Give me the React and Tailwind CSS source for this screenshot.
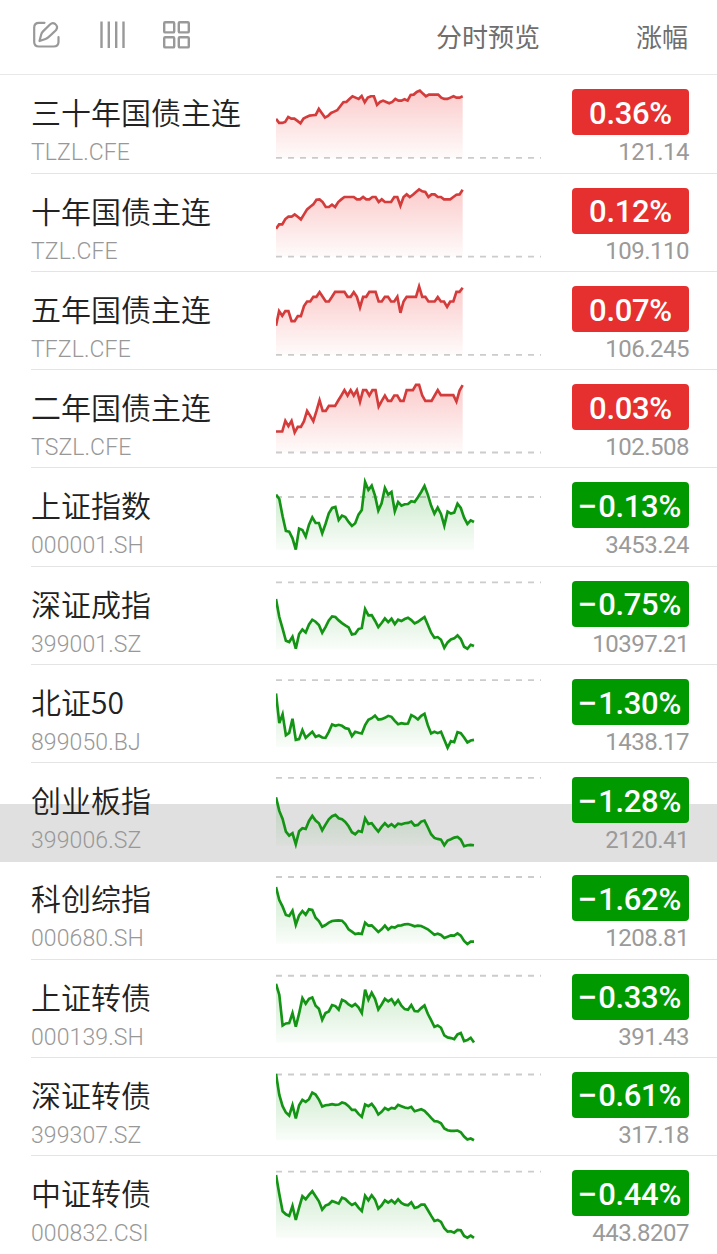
const SPAN = 98.24

const rows = [
  { name: '三十年国债主连', code: 'TLZL.CFE', pct: '0.36%', price: '121.14', oy: -13.8, dash: 235, base: 235,
    ys: [118,130,130,127,112,117,117,124,131,117,112,108,107,106,88,101,114,109,100,96,92,80,68,67,58,50,54,58,49,68,54,50,50,76,67,63,67,71,67,58,63,63,59,63,46,45,37,33,42,50,45,45,45,45,54,58,58,54,50,54,54,50] },
  { name: '十年国债主连', code: 'TZL.CFE', pct: '0.12%', price: '109.110', oy: 280.9, dash: 529, base: 529,
    ys: [445,432,432,416,409,409,402,409,417,402,387,379,372,358,357,365,380,380,373,380,365,357,350,350,350,350,357,357,350,357,357,350,350,365,357,365,365,365,350,350,376,350,342,350,343,335,327,333,335,350,342,342,350,350,357,357,357,350,343,342,328] },
  { name: '五年国债主连', code: 'TFZL.CFE', pct: '0.07%', price: '106.245', oy: -9.4, dash: 239, base: 239,
    ys: [152,108,122,108,108,138,138,123,123,93,79,79,65,65,51,65,79,79,65,50,50,50,50,65,65,51,65,97,65,65,50,50,50,79,79,65,65,79,79,65,113,79,65,65,65,65,34,65,65,79,79,79,66,79,79,95,79,79,50,50,38] },
  { name: '二年国债主连', code: 'TSZL.CFE', pct: '0.03%', price: '102.508', oy: 285.4, dash: 533, base: 533,
    ys: [470,470,470,438,454,438,473,456,456,439,408,423,439,409,376,408,408,393,393,393,377,362,346,362,346,362,346,381,346,346,362,346,346,395,378,362,378,378,362,362,378,378,346,346,346,330,330,362,378,378,378,362,346,361,361,361,361,361,380,347,331] },
  { name: '上证指数', code: '000001.SH', pct: '−0.13%', price: '3453.24', oy: -4.9, dash: 82, base: 242,
    ys: [75,88,140,184,186,206,240,177,181,201,165,143,160,160,191,163,131,115,112,151,138,142,157,169,161,135,121,37,61,48,78,123,101,55,75,67,125,97,108,104,103,95,97,83,67,49,75,108,132,114,133,168,126,132,129,102,115,144,163,152,157] },
  { name: '深证成指', code: '399001.SZ', pct: '−0.75%', price: '10397.21', oy: 289.8, dash: 336, base: 537,
    ys: [386,440,475,511,515,499,535,491,477,486,462,448,454,464,487,470,450,438,440,450,458,465,471,492,490,476,473,416,435,434,451,470,458,444,455,445,461,448,452,446,442,449,459,454,447,440,463,487,502,500,508,532,516,507,504,495,506,529,535,523,527] },
  { name: '北证50', code: '899050.BJ', pct: '−1.30%', price: '1438.17', oy: -0.5, dash: 45, base: 246,
    ys: [85,174,147,210,203,161,224,222,195,218,209,200,215,211,217,218,200,178,182,179,182,189,191,213,200,203,205,180,164,159,151,163,162,158,152,155,167,177,174,176,175,150,155,163,152,146,180,205,200,204,200,224,248,228,231,201,204,217,232,226,224] },
  { name: '创业板指', code: '399006.SZ', pct: '−1.28%', price: '2120.41', oy: 294.2, dash: 339, base: 543, band: true,
    ys: [397,438,462,500,512,505,538,499,490,492,468,453,467,475,496,479,463,454,450,460,463,471,484,502,508,498,501,460,477,475,488,500,486,475,485,478,486,476,478,475,474,470,482,480,470,467,487,508,519,522,524,541,527,523,518,516,524,544,541,540,541] },
  { name: '科创综指', code: '000680.SH', pct: '−1.62%', price: '1208.81', oy: -11, dash: 37, base: 237,
    ys: [67,106,126,151,154,138,180,152,139,150,134,136,159,169,186,181,174,169,168,167,168,178,194,201,208,206,208,174,183,182,192,202,194,183,195,187,189,183,182,179,178,181,185,183,184,189,194,202,210,207,211,220,216,212,213,206,213,229,238,231,231] },
  { name: '上证转债', code: '000139.SH', pct: '−0.33%', price: '391.43', oy: 283.7, dash: 331, base: 532,
    ys: [355,388,480,474,473,443,484,444,398,415,400,396,421,430,463,443,438,419,422,433,403,408,417,423,416,426,443,373,403,382,400,432,417,400,408,401,417,404,421,431,433,419,437,438,428,420,445,464,484,480,487,510,516,518,521,507,503,527,524,517,531] },
  { name: '深证转债', code: '399307.SZ', pct: '−0.61%', price: '317.18', oy: -6.6, dash: 43, base: 241,
    ys: [41,104,138,157,166,135,175,135,119,125,117,97,103,118,139,135,134,132,134,133,127,130,138,149,149,161,170,133,138,131,144,163,155,143,149,143,145,134,138,142,144,140,153,150,147,152,162,173,183,184,189,205,210,212,212,211,216,229,238,235,240] },
  { name: '中证转债', code: '000832.CSI', pct: '−0.44%', price: '443.8207', oy: 288.1, dash: 335, base: 535,
    ys: [345,402,454,463,468,438,480,443,409,418,405,394,409,424,449,437,433,423,427,431,413,417,427,435,430,443,453,407,421,406,419,446,436,421,428,421,430,418,429,434,436,427,444,441,434,434,450,467,483,480,486,505,515,514,518,510,511,528,533,527,534] },
]

function Sparkline({ row, up }) {
  const width = up ? 560 : 594
  const step = width / (row.ys.length - 1)
  const line = row.ys.map((y, i) => `${(i * step).toFixed(1)},${y}`).join(' ')
  const color = up ? '#d43c3c' : '#149414'
  const fill = up ? '#f03030' : '#16a016'
  const id = `fill-${row.code}`
  const top = Math.min(...row.ys)
  return (
    <svg className="h-[98.24px] w-[266px] shrink-0" viewBox={`0 ${row.oy} 798 ${SPAN * 3}`} preserveAspectRatio="none">
      <defs>
        <linearGradient id={id} gradientUnits="userSpaceOnUse" x1="0" x2="0" y1={up ? top : row.base - 205} y2={row.base}>
          <stop offset="0" stopColor={fill} stopOpacity="0.25" />
          <stop offset="1" stopColor={fill} stopOpacity="0.02" />
        </linearGradient>
      </defs>
      <line x1="0" x2="795" y1={row.dash} y2={row.dash} stroke="#cccccc" strokeWidth="5.5" strokeDasharray="18 18" />
      <polygon points={`0,${row.base} ${line} ${width},${row.base}`} fill={`url(#${id})`} />
      <polyline points={line} fill="none" stroke={color} strokeWidth="8" strokeLinejoin="miter" />
    </svg>
  )
}

function Row({ row, last }) {
  const up = !row.pct.startsWith('−')
  return (
    <li className="relative flex h-[98.24px] shrink-0 pl-[31px]">
      {row.band && <div className="absolute left-0 top-[41px] h-[58px] w-full bg-black/12" />}
      <div className={`relative flex flex-1 pr-[28px] ${last || row.band ? '' : 'border-b border-[#e4e4e4]'}`}>
        <div className="w-[245px] shrink-0 whitespace-nowrap pt-[15px]">
          <div className="text-[30px] leading-[42px] font-[350] text-[#222222]">{row.name}</div>
          <div className="mt-[6px] font-['Roboto'] text-[23px] leading-[30px] font-[350] tracking-[0.1px] text-[#989898]">{row.code}</div>
        </div>
        <Sparkline row={row} up={up} />
        <div className="ml-auto flex w-[117px] flex-col items-end pt-[14px] font-['Roboto']">
          <div className={`flex h-[46px] w-[117px] items-center justify-center rounded-[4px] pt-[4px] text-[31px] font-medium tracking-[-0.3px] text-white ${up ? 'bg-[#e63030]' : 'bg-[#009a00]'}`}>
            {!up && <span className="mr-px inline-block origin-right scale-x-115">−</span>}
            {row.pct.replace('−', '')}
          </div>
          <div className="mt-[2px] text-[24px] leading-[30px] tracking-[-0.5px] text-[#9a9a9a]">{row.price}</div>
        </div>
      </div>
    </li>
  )
}

export default function App() {
  return (
    <main className="h-[1254px] w-[717px] overflow-hidden bg-white font-['Noto_Sans_CJK_SC',sans-serif]">
      <header className="flex h-[75.4px] items-center border-b border-[#e8e8e8] pl-[32px] pr-[29px] text-[26px] text-[#6e6e6e]">
        <svg className="-mt-[4px] h-[30px] w-[30px]" viewBox="0 0 30 30" fill="none" stroke="#999999" strokeWidth="2.2" strokeLinecap="round" strokeLinejoin="round">
          <path d="M12.5 2.8H7Q2.2 2.8 2.2 7.5V22Q2.2 26.5 7 26.5H21.5Q26.5 26.5 26.5 22V17" />
          <path d="M7.5 21L9.2 14.4Q9.6 12.8 11 11.4L18 4.5Q20.5 2.2 23.2 4Q26.4 6.5 24.2 9.8Q23.8 10.4 16.2 17.4Q15 18.5 13.5 19Z" />
        </svg>
        <svg className="-mt-[4px] ml-[35px] h-[30px] w-[30px]" viewBox="0 0 30 30" stroke="#999999" strokeWidth="2.4">
          <path d="M4.5 1.5V28M11.8 1.5V28M19.2 1.5V28M26.5 1.5V28" />
        </svg>
        <svg className="-mt-[4px] ml-[35px] h-[30px] w-[30px]" viewBox="0 0 30 30" fill="none" stroke="#999999" strokeWidth="2.4">
          <rect x="2.2" y="2.2" width="10" height="10.2" rx="1" />
          <rect x="16.8" y="2.2" width="10" height="10.2" rx="1" />
          <rect x="2.2" y="17.2" width="10" height="10.2" rx="1" />
          <rect x="16.8" y="17.2" width="10" height="10.2" rx="1" />
        </svg>
        <span className="ml-auto -mt-[4px]">分时预览</span>
        <span className="-mt-[4px] ml-[96px]">涨幅</span>
      </header>
      <ul className="flex flex-col">
        {rows.map((row, i) => (
          <Row key={row.code} row={row} last={i === rows.length - 1} />
        ))}
      </ul>
    </main>
  )
}
